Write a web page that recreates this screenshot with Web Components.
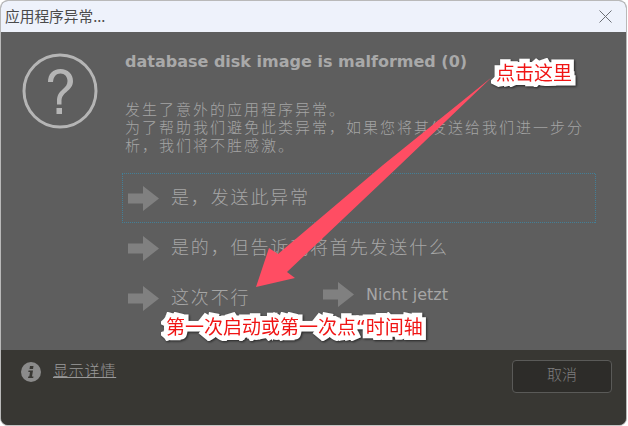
<!DOCTYPE html>
<html lang="zh">
<head>
<meta charset="utf-8">
<title>应用程序异常</title>
<style>
  html, body { margin: 0; padding: 0; background: #fff; }
  body { width: 628px; height: 426px; overflow: hidden; font-family: "Noto Sans CJK SC", "DejaVu Sans", sans-serif; }
</style>
</head>
<body>
<task-dialog caption="应用程序异常...">
  <task-body heading="database disk image is malformed (0)">发生了意外的应用程序异常。
为了帮助我们避免此类异常，如果您将其发送给我们进一步分析，我们将不胜感激。</task-body>
  <command-link selected>是，发送此异常</command-link>
  <command-link>是的，但告诉我将首先发送什么</command-link>
  <div style="display:flex">
    <command-link style="width:195px">这次不行</command-link>
    <command-link latin style="margin-top:-4px">Nicht jetzt</command-link>
  </div>
  <task-footer slot="footer"></task-footer>
  <note-arrow slot="overlay"></note-arrow>
  <note-label slot="overlay" style="left:495px;top:60px">点击这里</note-label>
  <note-label slot="overlay" style="left:165px;top:314px">第一次启动或第一次点“时间轴</note-label>
</task-dialog>

<script>
const F_CJK = '"Noto Sans CJK SC", "DejaVu Sans", sans-serif';

class TaskDialog extends HTMLElement {
  constructor() {
    super();
    this.attachShadow({mode: "open"});
    this.shadowRoot.innerHTML = `
      <style>
        :host { display: flex; flex-direction: column; position: relative; box-sizing: border-box;
                width: 627px; height: 426px; overflow: hidden; background: #5e5e5e;
                border: 1px solid #b9b9b9; border-bottom-color: #c4c4c4; border-radius: 8px; }
        header { flex: none; height: 31px; background: #eef2fb; display: flex; align-items: center;
                 justify-content: space-between; padding: 0 14px 0 4px; }
        .cap { font: 14.700px ${F_CJK}; color: #4a4a4a; position: relative; top: -1px; }
        main { flex: none; height: 318px; box-sizing: border-box; padding: 19px 30px 0 121px;
               background: #5e5e5e; }
        svg { display: block; }
      </style>
      <header>
        <span class="cap"></span>
        <svg width="13" height="13" viewBox="0 0 13 13"><path d="M.5.5l12 12M12.500.5l-12 12" stroke="#6b6f75" stroke-width="1" fill="none"/></svg>
      </header>
      <main><slot></slot></main>
      <slot name="footer"></slot>
      <slot name="overlay"></slot>`;
    this.shadowRoot.querySelector(".cap").textContent = this.getAttribute("caption");
  }
}

class TaskBody extends HTMLElement {
  constructor() {
    super();
    this.attachShadow({mode: "open"});
    this.shadowRoot.innerHTML = `
      <style>
        :host { display: block; position: relative; height: 114px; margin-bottom: 8px;
                font: 300 15px/18px ${F_CJK}; color: #a4a4a4; letter-spacing: 2px; }
        h1 { margin: 0 0 27px 3px; font: bold 16px/22px "DejaVu Sans", sans-serif; color: #a9a9a9; letter-spacing: 0; }
        .body { margin-left: 3px; width: 464px; white-space: pre-line; }
        svg { position: absolute; left: -100px; top: 1.500px; }
      </style>
      <svg width="76" height="76" viewBox="0 0 76 76">
        <circle cx="38" cy="38" r="36" fill="none" stroke="#b5b5b5" stroke-width="3"/>
        <path d="M26 29c0-8 5-13 12.500-13S51 21 51 28c0 5-3 8-6.500 11-3.500 3-5 5-5 9.500v3h-4.500v-3.500c0-5.500 2-8.500 5.500-11.500 3-2.700 5-4.700 5-8.500 0-4.500-3-7.500-7-7.500-4.500 0-7 3-7.500 8.500z" fill="#b5b5b5"/>
        <rect x="34.500" y="55" width="5.500" height="6" fill="#b5b5b5"/>
      </svg>
      <h1></h1>
      <div class="body"><slot></slot></div>`;
    this.shadowRoot.querySelector("h1").textContent = this.getAttribute("heading");
  }
}

class CommandLink extends HTMLElement {
  constructor() {
    super();
    this.attachShadow({mode: "open"});
    this.shadowRoot.innerHTML = `
      <style>
        :host { display: flex; align-items: center; box-sizing: border-box; height: 50px; padding-left: 6px;
                font: 300 18px ${F_CJK}; color: #a6a6a6; letter-spacing: 1.850px; }
        :host([selected]) {
          background:
            repeating-linear-gradient(90deg, #437f97 0 1px, transparent 1px 2px) top / 100% 1px no-repeat,
            repeating-linear-gradient(90deg, #437f97 0 1px, transparent 1px 2px) bottom / 100% 1px no-repeat,
            repeating-linear-gradient(0deg, #437f97 0 1px, transparent 1px 2px) left / 1px 100% no-repeat,
            repeating-linear-gradient(0deg, #437f97 0 1px, transparent 1px 2px) right / 1px 100% no-repeat;
        }
        :host([latin]) { font: 16px "DejaVu Sans", sans-serif; letter-spacing: 0; }
        svg { flex: none; margin-right: 12px; }
        .text { margin-top: -4px; }
        :host([latin]) .text { margin-top: 0; }
      </style>
      <svg width="31" height="25" viewBox="0 0 31 25"><path d="M0 7.500h15V0l16 12.500L15 25v-7.500H0z" fill="#808080"/></svg>
      <span class="text"><slot></slot></span>`;
  }
}

class TaskFooter extends HTMLElement {
  constructor() {
    super();
    this.attachShadow({mode: "open"});
    this.shadowRoot.innerHTML = `
      <style>
        :host { display: flex; justify-content: space-between; align-items: flex-start; height: 75px;
                box-sizing: border-box; padding: 10px 14px 0 20px; background: #383733; }
        .more { display: flex; align-items: center; gap: 12px; margin-top: 2px; }
        a { font: 300 15px/20px ${F_CJK}; color: #9a9a9a; text-decoration: underline; letter-spacing: .8px; position: relative; top: -2px; }
        button { width: 100px; height: 33px; box-sizing: border-box; background: #2d2c29; border: 1px solid #5a5a58;
                 border-radius: 4px; color: #7e7e7e; font: 300 15px/20px ${F_CJK}; letter-spacing: 0; padding: 0 0 5px; }
        svg { display: block; }
      </style>
      <div class="more">
        <svg width="20" height="20" viewBox="0 0 20 20">
          <circle cx="10" cy="10" r="10" fill="#8b8b8b"/>
          <path d="M9 4h3.500l-.5 3H8.500z" fill="#383733"/>
          <path d="M7.500 8.500h4.500l-1 6h1.500l-.3 1.500H7l.3-1.500h1l.7-4.500H7.300z" fill="#383733"/>
        </svg>
        <a>显示详情</a>
      </div>
      <button>取消</button>`;
  }
}

class NoteArrow extends HTMLElement {
  constructor() {
    super();
    this.attachShadow({mode: "open"});
    this.shadowRoot.innerHTML = `
      <style>
        :host { position: absolute; left: -1px; top: -1px; display: block; width: 628px; height: 426px; pointer-events: none; }
      </style>
      <svg width="628" height="426" viewBox="0 0 628 426">
        <polygon points="492,77 400,165 287,272 295,278 256,287 269,248 278,254 383,165" fill="#ff4d63"/>
      </svg>`;
  }
}

class NoteLabel extends HTMLElement {
  constructor() {
    super();
    this.attachShadow({mode: "open"});
    this.shadowRoot.innerHTML = `
      <style>
        :host { position: absolute; display: block; white-space: nowrap;
                font: 19px/24px "DejaVu Sans", "Noto Sans CJK SC", sans-serif; color: #f01414;
                -webkit-text-stroke: 9px #fff; paint-order: stroke fill; stroke-linejoin: round;
                filter: drop-shadow(1px 1px 1px rgba(0,0,0,.6)); }
      </style>
      <slot></slot>`;
  }
}

customElements.define("task-dialog", TaskDialog);
customElements.define("task-body", TaskBody);
customElements.define("command-link", CommandLink);
customElements.define("task-footer", TaskFooter);
customElements.define("note-arrow", NoteArrow);
customElements.define("note-label", NoteLabel);
</script>
</body>
</html>
